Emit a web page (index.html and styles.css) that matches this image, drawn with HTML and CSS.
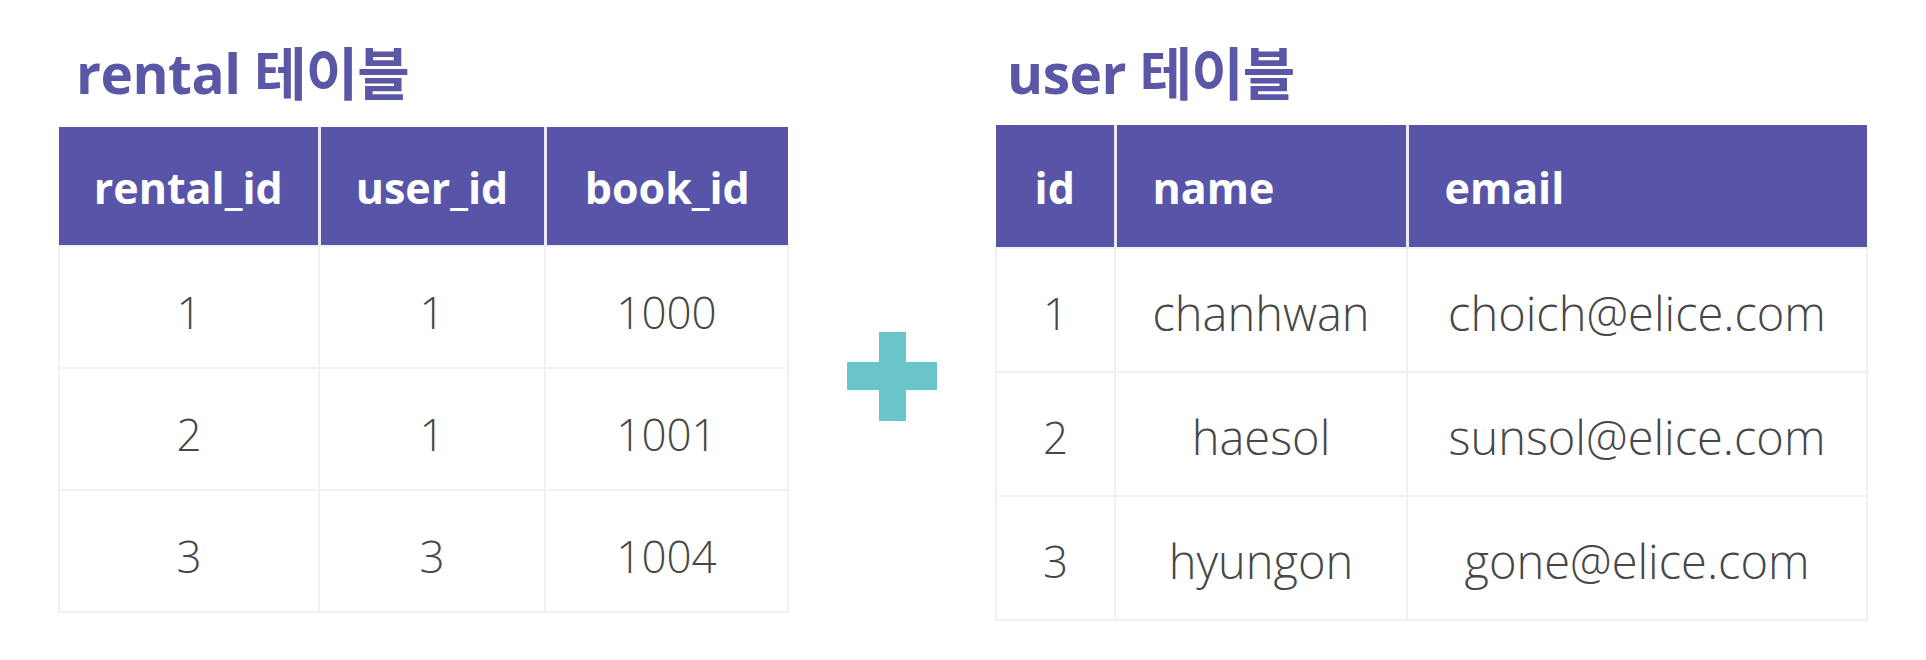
FILE: index.html
```html
<!DOCTYPE html>
<html lang="ko">
<head>
<meta charset="utf-8">
<title>rental + user 테이블</title>
<link rel="stylesheet" href="styles.css">
</head>
<body>
<main class="page">
  <section class="block block-left">
    <h2 class="title title-left">rental <span class="ko">테이블</span></h2>
    <table class="tbl tbl-left">
      <colgroup>
        <col class="c-rental">
        <col class="c-user">
        <col class="c-book">
      </colgroup>
      <thead>
        <tr><th>rental_id</th><th>user_id</th><th>book_id</th></tr>
      </thead>
      <tbody>
        <tr><td>1</td><td>1</td><td>1000</td></tr>
        <tr><td>2</td><td>1</td><td>1001</td></tr>
        <tr><td>3</td><td>3</td><td>1004</td></tr>
      </tbody>
    </table>
  </section>

  <div class="plus-wrap">
    <div class="plus" aria-label="plus"></div>
  </div>

  <section class="block block-right">
    <h2 class="title title-right">user <span class="ko">테이블</span></h2>
    <table class="tbl tbl-right">
      <colgroup>
        <col class="c-id">
        <col class="c-name">
        <col class="c-email">
      </colgroup>
      <thead>
        <tr><th>id</th><th class="left">name</th><th class="left">email</th></tr>
      </thead>
      <tbody>
        <tr><td>1</td><td class="word">chanhwan</td><td class="word">choich@elice.com</td></tr>
        <tr><td>2</td><td class="word">haesol</td><td class="word">sunsol@elice.com</td></tr>
        <tr><td>3</td><td class="word">hyungon</td><td class="word">gone@elice.com</td></tr>
      </tbody>
    </table>
  </section>
</main>
</body>
</html>
```

FILE: styles.css
```css
html, body {
  margin: 0;
  padding: 0;
  background: #ffffff;
}

body {
  width: 1926px;
  height: 660px;
  overflow: hidden;
  font-family: "Open Sans", "Noto Sans CJK KR", sans-serif;
}

.page {
  display: flex;
  align-items: flex-start;
  padding-left: 58px;
}

.block {
  display: flex;
  flex-direction: column;
}

.title {
  margin: 0;
  font-family: "Open Sans", "Noto Sans CJK KR", sans-serif;
  font-weight: 700;
  font-size: 55px;
  line-height: 64px;
  height: 64px;
  color: #5b57a7;
  letter-spacing: -0.5px;
  white-space: nowrap;
}

.title .ko {
  font-family: "Noto Sans CJK KR", sans-serif;
  font-size: 57px;
  letter-spacing: -1px;
  vertical-align: -1px;
}

.title-left {
  margin-top: 38px;
  margin-bottom: 25px;
  padding-left: 18px;
}

.title-right {
  margin-top: 38px;
  margin-bottom: 23px;
  padding-left: 12px;
}

.tbl {
  border-collapse: collapse;
  table-layout: fixed;
}

.tbl-left { width: 729px; }
.tbl-right { width: 871px; }

.c-rental { width: 260px; }
.c-user { width: 226px; }
.c-book { width: 243px; }

.c-id { width: 119px; }
.c-name { width: 292px; }
.c-email { width: 460px; }

.tbl th {
  background: #5855a8;
  color: #ffffff;
  font-weight: 700;
  font-size: 43px;
  text-align: center;
  padding: 2px 0 0 0;
  border-left: 3px solid #ebe9f7;
  border-right: 3px solid #ebe9f7;
  border-top: 0;
}

.tbl th:first-child { border-left: 0; }
.tbl th:last-child { border-right: 0; }

.tbl th.left {
  text-align: left;
  padding-left: 36px;
}

.tbl-left thead tr { height: 119px; }
.tbl-left tbody tr { height: 122px; }

.tbl-right thead tr { height: 123px; }
.tbl-right tbody tr { height: 124px; }

.tbl td {
  font-weight: 300;
  font-size: 44px;
  color: #474747;
  text-align: center;
  padding: 0;
  border: 2px solid #f1f0f5;
}

.tbl-left td {
  padding-top: 10px;
}

.tbl-right td {
  padding-top: 6px;
}

.tbl td.word {
  font-size: 47px;
}

.plus-wrap {
  width: 206px;
  display: flex;
  justify-content: center;
  padding-top: 332px;
}

.plus {
  position: relative;
  width: 90px;
  height: 89px;
}

.plus::before,
.plus::after {
  content: "";
  position: absolute;
  background: #69c4cc;
}

.plus::before {
  left: 32px;
  top: 0;
  width: 27px;
  height: 89px;
}

.plus::after {
  left: 0;
  top: 30px;
  width: 90px;
  height: 28px;
}
```
